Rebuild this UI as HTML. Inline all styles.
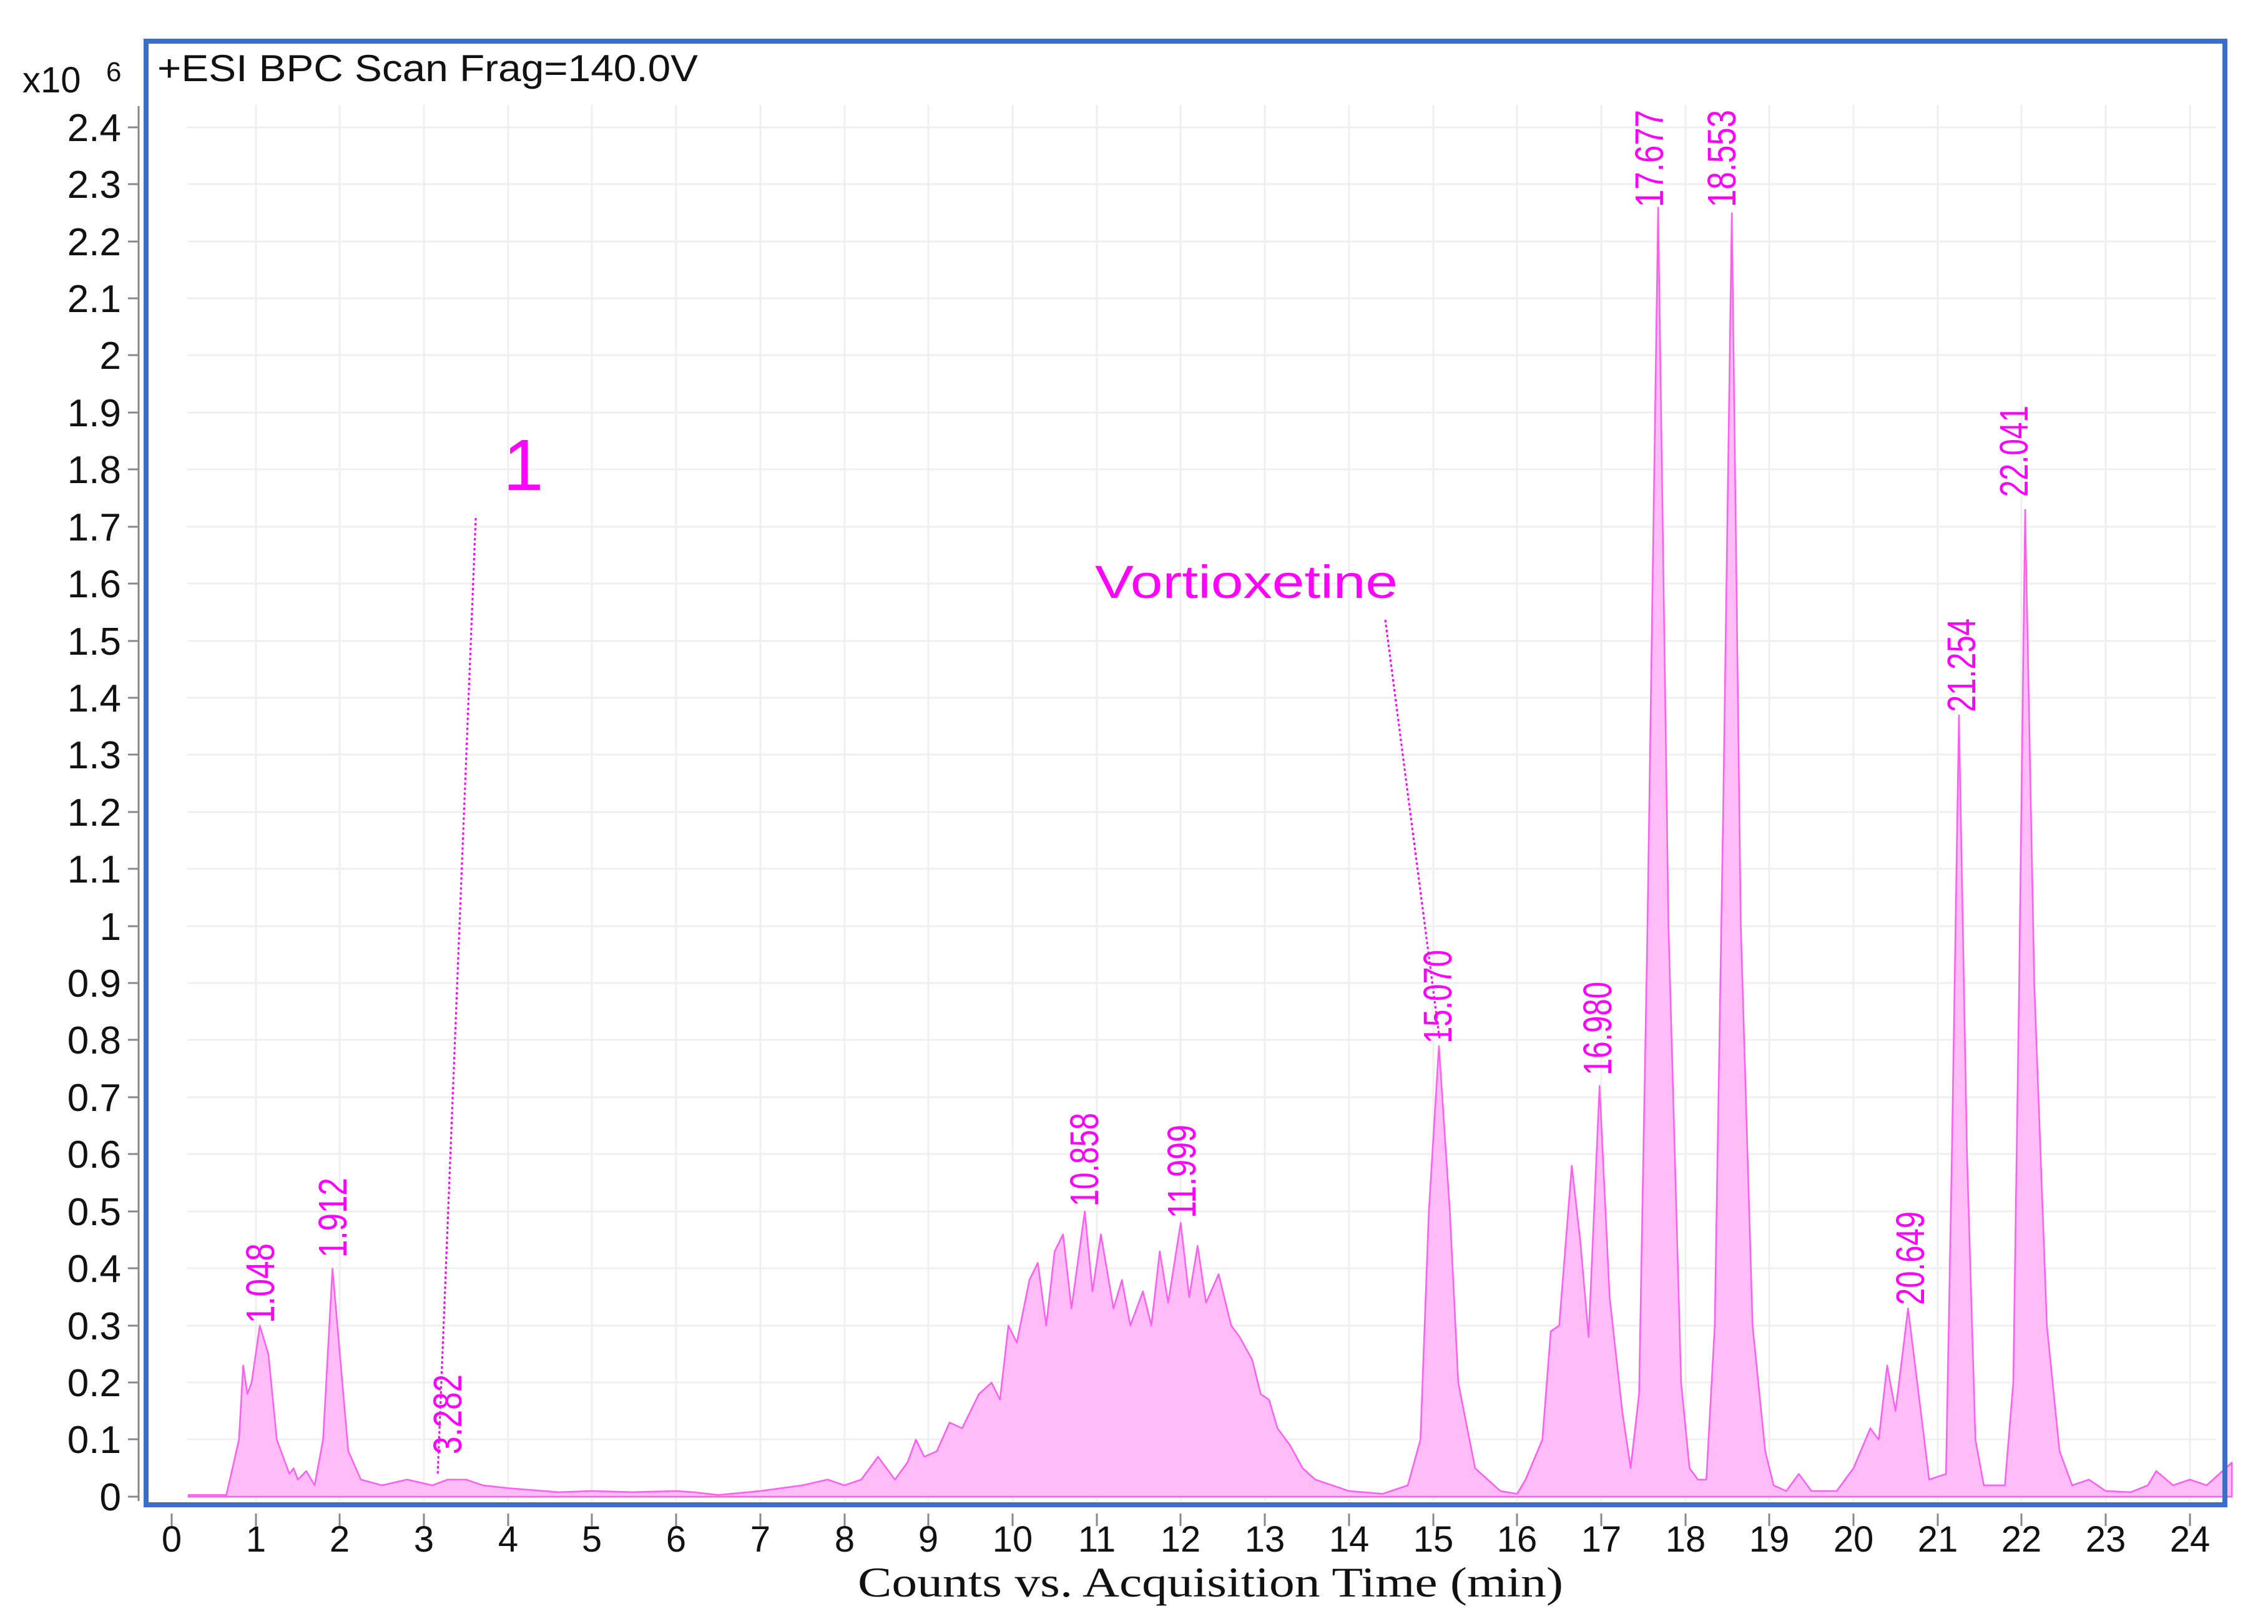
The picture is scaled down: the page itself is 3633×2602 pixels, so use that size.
<!DOCTYPE html>
<html><head><meta charset="utf-8"><style>
html,body{margin:0;padding:0;background:#fff;}
svg{display:block;}
</style></head><body>
<svg width="3633" height="2602" viewBox="0 0 3633 2602" xmlns="http://www.w3.org/2000/svg" font-family="Liberation Sans, Arial, sans-serif">
<rect width="3633" height="2602" fill="#fff"/>
<!-- grid -->
<g stroke="#efefef" stroke-width="3">
<path d="M300 204H3550M300 295H3550M300 387H3550M300 478H3550M300 569H3550M300 661H3550M300 752H3550M300 844H3550M300 935H3550M300 1027H3550M300 1118H3550M300 1209H3550M300 1301H3550M300 1392H3550M300 1484H3550M300 1575H3550M300 1666H3550M300 1758H3550M300 1849H3550M300 1941H3550M300 2032H3550M300 2124H3550M300 2215H3550M300 2306H3550M300 2398H3550"/>
<path d="M410 168V2405M544 168V2405M679 168V2405M814 168V2405M948 168V2405M1083 168V2405M1218 168V2405M1353 168V2405M1487 168V2405M1622 168V2405M1757 168V2405M1891 168V2405M2026 168V2405M2161 168V2405M2296 168V2405M2430 168V2405M2565 168V2405M2700 168V2405M2834 168V2405M2969 168V2405M3104 168V2405M3238 168V2405M3373 168V2405M3508 168V2405"/>
</g>
<g stroke="#888" stroke-width="3">
<path d="M222 170V2405"/>
<path d="M205 204H222M205 295H222M205 387H222M205 478H222M205 569H222M205 661H222M205 752H222M205 844H222M205 935H222M205 1027H222M205 1118H222M205 1209H222M205 1301H222M205 1392H222M205 1484H222M205 1575H222M205 1666H222M205 1758H222M205 1849H222M205 1941H222M205 2032H222M205 2124H222M205 2215H222M205 2306H222M205 2398H222"/>
<path d="M275 2425V2445M410 2425V2445M544 2425V2445M679 2425V2445M814 2425V2445M948 2425V2445M1083 2425V2445M1218 2425V2445M1353 2425V2445M1487 2425V2445M1622 2425V2445M1757 2425V2445M1891 2425V2445M2026 2425V2445M2161 2425V2445M2296 2425V2445M2430 2425V2445M2565 2425V2445M2700 2425V2445M2834 2425V2445M2969 2425V2445M3104 2425V2445M3238 2425V2445M3373 2425V2445M3508 2425V2445"/>
</g>
<!-- chromatogram -->
<g transform="translate(275,2398) scale(134.7,-914)">
<path fill="#ffbcf7" stroke="#ff5cf0" stroke-width="2.5" vector-effect="non-scaling-stroke" stroke-linejoin="round" d="M0.2,0.003 L0.65,0.003 0.8,0.1 0.85,0.23 0.9,0.18 0.95,0.2 1.048,0.3 1.15,0.25 1.25,0.1 1.4,0.04 1.45,0.05 1.5,0.03 1.6,0.045 1.7,0.02 1.8,0.1 1.912,0.4 2.0,0.25 2.1,0.08 2.25,0.03 2.5,0.02 2.8,0.03 3.1,0.02 3.282,0.03 3.5,0.03 3.7,0.02 4.0,0.015 4.6,0.008 5,0.01 5.5,0.008 6,0.01 6.2,0.008 6.5,0.003 7.0,0.01 7.5,0.02 7.8,0.03 8.0,0.02 8.2,0.03 8.4,0.07 8.5,0.05 8.6,0.03 8.75,0.06 8.85,0.1 8.95,0.07 9.1,0.08 9.25,0.13 9.4,0.12 9.6,0.18 9.75,0.2 9.85,0.17 9.95,0.3 10.05,0.27 10.2,0.38 10.3,0.41 10.4,0.3 10.5,0.43 10.6,0.46 10.7,0.33 10.858,0.5 10.95,0.36 11.05,0.46 11.2,0.33 11.3,0.38 11.4,0.3 11.55,0.36 11.65,0.3 11.75,0.43 11.85,0.34 11.999,0.48 12.1,0.35 12.2,0.44 12.3,0.34 12.45,0.39 12.6,0.3 12.7,0.28 12.85,0.24 12.95,0.18 13.05,0.17 13.15,0.12 13.3,0.09 13.45,0.05 13.6,0.03 14.0,0.01 14.4,0.005 14.7,0.02 14.85,0.1 14.95,0.5 15.07,0.79 15.2,0.5 15.3,0.2 15.5,0.05 15.8,0.01 16.0,0.005 16.1,0.03 16.3,0.1 16.4,0.29 16.5,0.3 16.65,0.58 16.75,0.45 16.85,0.28 16.98,0.72 17.1,0.35 17.25,0.15 17.35,0.05 17.45,0.18 17.55,1.0 17.677,2.26 17.8,1.0 17.95,0.2 18.05,0.05 18.15,0.03 18.25,0.03 18.35,0.3 18.45,1.2 18.553,2.25 18.66,1.0 18.8,0.3 18.95,0.08 19.05,0.02 19.2,0.01 19.35,0.04 19.5,0.01 19.8,0.01 20.0,0.05 20.2,0.12 20.3,0.1 20.4,0.23 20.5,0.15 20.649,0.33 20.8,0.15 20.9,0.03 21.1,0.04 21.17,0.6 21.254,1.37 21.35,0.6 21.45,0.1 21.55,0.02 21.8,0.02 21.9,0.2 21.97,0.9 22.041,1.73 22.15,0.9 22.3,0.3 22.45,0.08 22.6,0.02 22.8,0.03 23.0,0.01 23.3,0.008 23.5,0.02 23.6,0.045 23.8,0.02 24.0,0.03 24.2,0.02 24.5,0.06 L24.5,0 0.2,0 Z"/>
</g>
<rect x="234" y="66" width="3330" height="2345" fill="none" stroke="#3a6fc8" stroke-width="8"/>
<text x="252" y="130" font-size="60" fill="#111" textLength="866" lengthAdjust="spacingAndGlyphs">+ESI BPC Scan Frag=140.0V</text>
<text x="36" y="148" font-size="58" fill="#111">x10</text>
<text x="170" y="130" font-size="44" fill="#111">6</text>
<g font-size="62" fill="#111" text-anchor="end">
<text x="194" y="226">2.4</text><text x="194" y="317">2.3</text><text x="194" y="409">2.2</text><text x="194" y="500">2.1</text><text x="194" y="591">2</text><text x="194" y="683">1.9</text><text x="194" y="774">1.8</text><text x="194" y="866">1.7</text><text x="194" y="957">1.6</text><text x="194" y="1049">1.5</text><text x="194" y="1140">1.4</text><text x="194" y="1231">1.3</text><text x="194" y="1323">1.2</text><text x="194" y="1414">1.1</text><text x="194" y="1506">1</text><text x="194" y="1597">0.9</text><text x="194" y="1688">0.8</text><text x="194" y="1780">0.7</text><text x="194" y="1871">0.6</text><text x="194" y="1963">0.5</text><text x="194" y="2054">0.4</text><text x="194" y="2146">0.3</text><text x="194" y="2237">0.2</text><text x="194" y="2328">0.1</text><text x="194" y="2420">0</text>
</g>
<g font-size="58" fill="#111" text-anchor="middle">
<text x="275" y="2486">0</text><text x="410" y="2486">1</text><text x="544" y="2486">2</text><text x="679" y="2486">3</text><text x="814" y="2486">4</text><text x="948" y="2486">5</text><text x="1083" y="2486">6</text><text x="1218" y="2486">7</text><text x="1353" y="2486">8</text><text x="1487" y="2486">9</text><text x="1622" y="2486">10</text><text x="1757" y="2486">11</text><text x="1891" y="2486">12</text><text x="2026" y="2486">13</text><text x="2161" y="2486">14</text><text x="2296" y="2486">15</text><text x="2430" y="2486">16</text><text x="2565" y="2486">17</text><text x="2700" y="2486">18</text><text x="2834" y="2486">19</text><text x="2969" y="2486">20</text><text x="3104" y="2486">21</text><text x="3238" y="2486">22</text><text x="3373" y="2486">23</text><text x="3508" y="2486">24</text>
</g>
<text x="1374" y="2558" font-family="Liberation Serif, serif" font-size="68" fill="#111" textLength="1130" lengthAdjust="spacingAndGlyphs">Counts vs. Acquisition Time (min)</text>
<g stroke="#ff00ff" stroke-width="3" stroke-dasharray="4,4" fill="none">
<path d="M762 830L701 2364"/>
<path d="M2219 993L2306 1665"/>
</g>
<text x="806" y="785" font-size="116" fill="#ff00ff">1</text>
<text x="1754" y="958" font-size="74" fill="#ff00ff" textLength="485" lengthAdjust="spacingAndGlyphs">Vortioxetine</text>
<g font-size="64" fill="#ff00ff">
<text transform="translate(439,2120) rotate(-90)" textLength="128" lengthAdjust="spacingAndGlyphs">1.048</text>
<text transform="translate(555,2015) rotate(-90)" textLength="128" lengthAdjust="spacingAndGlyphs">1.912</text>
<text transform="translate(739,2330) rotate(-90)" textLength="128" lengthAdjust="spacingAndGlyphs">3.282</text>
<text transform="translate(1759,1933) rotate(-90)" textLength="150" lengthAdjust="spacingAndGlyphs">10.858</text>
<text transform="translate(1915,1952) rotate(-90)" textLength="150" lengthAdjust="spacingAndGlyphs">11.999</text>
<text transform="translate(2325,1672) rotate(-90)" textLength="150" lengthAdjust="spacingAndGlyphs">15.070</text>
<text transform="translate(2581,1723) rotate(-90)" textLength="150" lengthAdjust="spacingAndGlyphs">16.980</text>
<text transform="translate(2664,332) rotate(-90)" textLength="156" lengthAdjust="spacingAndGlyphs">17.677</text>
<text transform="translate(2780,332) rotate(-90)" textLength="156" lengthAdjust="spacingAndGlyphs">18.553</text>
<text transform="translate(3082,2091) rotate(-90)" textLength="150" lengthAdjust="spacingAndGlyphs">20.649</text>
<text transform="translate(3164,1141) rotate(-90)" textLength="150" lengthAdjust="spacingAndGlyphs">21.254</text>
<text transform="translate(3248,796) rotate(-90)" textLength="146" lengthAdjust="spacingAndGlyphs">22.041</text>
</g>
</svg>
</body></html>
